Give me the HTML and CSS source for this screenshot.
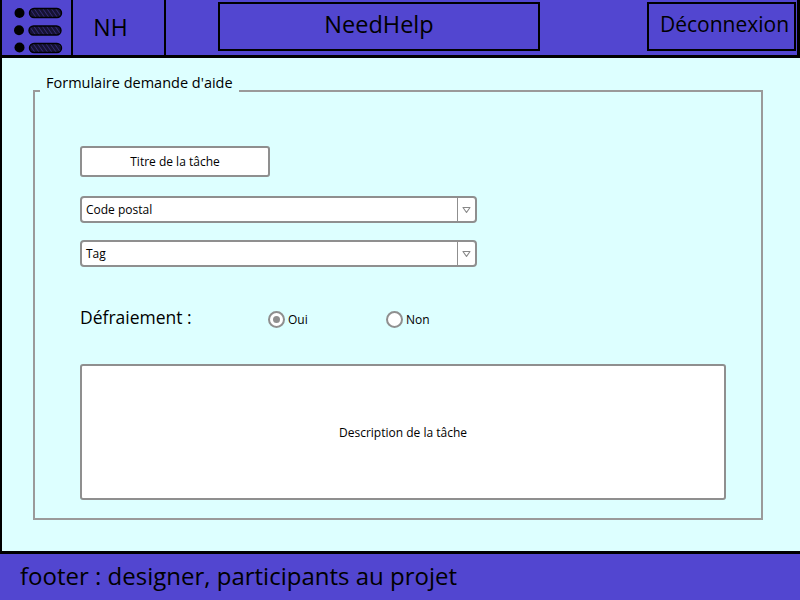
FILE: index.html
```html
<!DOCTYPE html>
<html lang="fr">
<head>
<meta charset="utf-8">
<title>NeedHelp</title>
<link rel="stylesheet" href="styles.css">
</head>
<body>
<div class="page">
  <header class="header">
    <div class="menu">
      <svg width="69" height="55" viewBox="0 0 69 55">
        <defs>
          <pattern id="hatch" width="3.5" height="3.5" patternUnits="userSpaceOnUse" patternTransform="rotate(-35)">
            <rect width="3.5" height="3.5" fill="#161233"/>
            <line x1="0" y1="0" x2="0" y2="3.5" stroke="#5448c0" stroke-width="0.8"/>
          </pattern>
        </defs>
        <circle cx="17.5" cy="13" r="5" fill="#000"/>
        <circle cx="17" cy="30.3" r="5" fill="#000"/>
        <circle cx="17.5" cy="47.5" r="5" fill="#000"/>
        <rect x="27.5" y="8.5" width="32" height="9" rx="4.5" fill="url(#hatch)" stroke="#000" stroke-width="1.4"/>
        <rect x="27" y="26" width="32" height="9" rx="4.5" fill="url(#hatch)" stroke="#000" stroke-width="1.4"/>
        <rect x="27.5" y="43.5" width="32" height="9" rx="4.5" fill="url(#hatch)" stroke="#000" stroke-width="1.4"/>
      </svg>
    </div>
    <div class="logo">NH</div>
    <div class="title">NeedHelp</div>
    <div class="logout">Déconnexion</div>
  </header>

  <main class="main">
    <fieldset class="form">
      <legend class="form-legend">Formulaire demande d'aide</legend>

      <div class="field-title">Titre de la tâche</div>

      <div class="select select-first">
        <span class="select-text">Code postal</span>
        <span class="select-btn">
          <svg width="9" height="8" viewBox="0 0 9 8"><path d="M1 1.5 L8 1.5 L4.5 6.5 Z" fill="none" stroke="#888" stroke-width="1.1" stroke-linejoin="round"/></svg>
        </span>
      </div>

      <div class="select select-second">
        <span class="select-text">Tag</span>
        <span class="select-btn">
          <svg width="9" height="8" viewBox="0 0 9 8"><path d="M1 1.5 L8 1.5 L4.5 6.5 Z" fill="none" stroke="#888" stroke-width="1.1" stroke-linejoin="round"/></svg>
        </span>
      </div>

      <div class="radio-row">
        <span class="radio-label">Défraiement :</span>
        <span class="radio-opt radio-oui"><span class="radio radio-checked"></span>Oui</span>
        <span class="radio-opt"><span class="radio"></span>Non</span>
      </div>

      <div class="description">Description de la tâche</div>
    </fieldset>
  </main>

  <footer class="footer">footer : designer, participants au projet</footer>
</div>
</body>
</html>
```

FILE: styles.css
```css
* {
  box-sizing: border-box;
}

html, body {
  margin: 0;
  padding: 0;
}

body {
  font-family: "Open Sans", "DejaVu Sans", sans-serif;
  color: #000;
}

.page {
  width: 800px;
  height: 600px;
  display: flex;
  flex-direction: column;
}

/* Header */
.header {
  height: 58px;
  flex: none;
  display: flex;
  align-items: flex-start;
  background: #5246d0;
  border-bottom: 3px solid #000;
  border-right: 3px solid #000;
}

.menu {
  width: 73px;
  height: 55px;
  border-left: 2px solid #000;
  border-right: 2px solid #000;
  display: flex;
}

.logo {
  width: 93px;
  height: 55px;
  border-right: 2px solid #000;
  display: flex;
  align-items: center;
  justify-content: center;
  font-size: 23px;
  padding: 0 16px 2px 0;
}

.title {
  margin-left: 52px;
  margin-top: 2px;
  width: 322px;
  height: 49px;
  border: 2px solid #000;
  display: flex;
  align-items: center;
  justify-content: center;
  font-size: 23.5px;
  padding-bottom: 6px;
}

.logout {
  margin-left: 107px;
  margin-top: 2px;
  width: 149px;
  height: 49px;
  border: 2px solid #000;
  display: flex;
  align-items: center;
  justify-content: center;
  font-size: 21px;
  padding: 0 0 5px 6px;
}

/* Main */
.main {
  flex: 1;
  background: #ddffff;
  border-left: 2px solid #000;
  padding: 17px 0 0 31px;
}

.form {
  margin: 0;
  width: 730px;
  height: 445px;
  border: 2px solid #9a9a9a;
  padding: 38px 0 0 45px;
  display: flex;
  flex-direction: column;
  align-items: flex-start;
}

.form > * {
  flex: none;
}

.form-legend {
  margin-left: -40px;
  padding: 0 6px 16px 6px;
  font-size: 14.5px;
  line-height: 16px;
}

.field-title {
  margin-top: 1px;
  width: 190px;
  height: 31px;
  background: #fff;
  border: 2px solid #8f8f8f;
  border-radius: 3px;
  display: flex;
  align-items: center;
  justify-content: center;
  font-size: 12px;
}

.select {
  width: 397px;
  height: 27px;
  background: #fff;
  border: 2px solid #8f8f8f;
  border-radius: 4px;
  display: flex;
  align-items: center;
  font-size: 12px;
}

.select-first {
  margin-top: 19px;
}

.select-second {
  margin-top: 17px;
}

.select-text {
  flex: 1;
  padding-left: 4px;
}

.select-btn {
  width: 18px;
  height: 100%;
  border-left: 1.5px solid #8f8f8f;
  display: flex;
  align-items: center;
  justify-content: center;
}

.radio-row {
  margin-top: 40px;
  display: flex;
  align-items: center;
  height: 24px;
}

.radio-label {
  width: 188px;
  font-size: 17.5px;
  padding-bottom: 4px;
}

.radio-opt {
  display: flex;
  align-items: center;
  font-size: 12px;
  gap: 3px;
}

.radio-oui {
  width: 118px;
}

.radio {
  width: 17px;
  height: 17px;
  border-radius: 50%;
  border: 2px solid #8f8f8f;
  background: #fff;
  display: flex;
  align-items: center;
  justify-content: center;
}

.radio-checked::after {
  content: "";
  width: 7px;
  height: 7px;
  border-radius: 50%;
  background: #8f8f8f;
}

.description {
  margin-top: 33px;
  width: 646px;
  height: 136px;
  background: #fff;
  border: 2px solid #8f8f8f;
  border-radius: 3px;
  display: flex;
  align-items: center;
  justify-content: center;
  font-size: 12px;
}

/* Footer */
.footer {
  height: 49px;
  flex: none;
  background: #5246d0;
  border-top: 3px solid #000;
  padding-left: 20px;
  display: flex;
  align-items: center;
  font-size: 24px;
  padding-bottom: 3px;
}
```
